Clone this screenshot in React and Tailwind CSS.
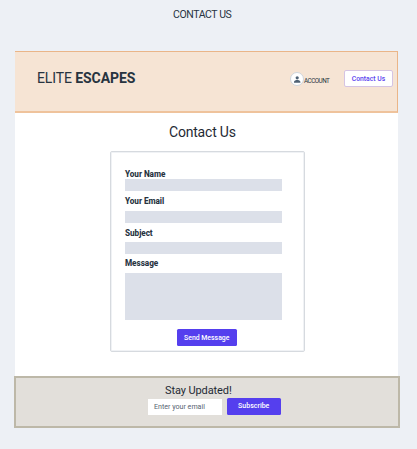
function Field({ label, labelClass, boxClass }) {
  return (
    <div className="flex flex-col">
      <label className={`whitespace-nowrap text-[8.2px] font-extrabold leading-[10px] tracking-[-0.05px] text-[#27333f] ${labelClass}`}>
        {label}
      </label>
      <div className={`w-[156.5px] bg-[#dce0e9] ${boxClass}`} />
    </div>
  );
}

function Header() {
  return (
    <header className="flex h-[62px] w-[383px] shrink-0 border-t border-r border-b-2 border-t-[#eab588] border-r-[#eab588] border-b-[#efc39c] bg-[#f6e4d4]">
      <h1 className="ml-[22px] mt-[17px] w-[120px] whitespace-nowrap text-[14px] leading-[18px] tracking-[-0.1px] text-[#27333f]">
        ELITE <span className="font-bold">ESCAPES</span>
      </h1>
      <div className="ml-[133px] mt-5 flex h-[14px] w-[54px] items-center">
        <svg viewBox="0 0 14 14" className="h-[14px] w-[14px] shrink-0">
          <circle cx="7" cy="7" r="6.5" fill="#fff" stroke="#cfd5dc" />
          <circle cx="7.2" cy="5.8" r="1.6" fill="#4f6275" />
          <path d="M4 10.8V9.9C4 8.6 6 8.1 7.2 8.1s3.2.5 3.2 1.8v.9z" fill="#4f6275" />
        </svg>
        <span className="mt-[3px] whitespace-nowrap text-[6.3px] leading-[8px] tracking-[-0.5px] text-[#27333f]">ACCOUNT</span>
      </div>
      <button className="mt-[18px] flex h-[17px] w-[49px] items-center justify-center whitespace-nowrap rounded-[2px] border border-[#d5c4e3] bg-white pt-px text-[6.8px] font-medium leading-none text-[#5941ee]">
        Contact Us
      </button>
    </header>
  );
}

function ContactForm() {
  return (
    <section className="ml-[95px] mt-[9px] flex h-[201px] w-[195px] shrink-0 flex-col rounded-[2px] border border-[#d6dadf] pl-[14px] shadow-[inset_0_0_0_1px_#f0f2f5]">
      <Field label="Your Name" labelClass="mt-[17px]" boxClass="h-3" />
      <Field label="Your Email" labelClass="mt-[5px] mb-[5px]" boxClass="h-3" />
      <Field label="Subject" labelClass="mt-[5px] mb-1" boxClass="h-3" />
      <Field label="Message" labelClass="mt-1 mb-[5px]" boxClass="h-[47px]" />
      <button className="ml-[51.5px] mt-[9px] flex h-[17px] w-[60.5px] items-center justify-center whitespace-nowrap rounded-[1.5px] bg-[#553fee] pt-px text-[6.9px] font-medium leading-none text-white">
        Send Message
      </button>
    </section>
  );
}

function Newsletter() {
  return (
    <footer className="ml-[-1px] mt-6 h-[52px] w-[386px] shrink-0 border-2 border-[#bdb8a8] bg-[#e2dfda]">
      <h2 className="ml-[149px] mt-[6px] whitespace-nowrap text-[11px] leading-[14px] tracking-[-0.1px] text-[#1f2a35]">
        Stay Updated!
      </h2>
      <div className="ml-[132px] flex h-[17px] items-center">
        <div className="flex h-4 w-[74px] items-center whitespace-nowrap bg-white pl-[6px] text-[7.1px] leading-none text-[#566372]">
          Enter your email
        </div>
        <button className="ml-[5px] flex h-[17px] w-[53.5px] items-center justify-center whitespace-nowrap rounded-[1.5px] bg-[#553fee] text-[7px] font-medium leading-none text-white">
          Subscribe
        </button>
      </div>
    </footer>
  );
}

export default function App() {
  return (
    <div className="h-[449px] w-[417px] overflow-hidden bg-[#edf0f5] font-['Roboto',sans-serif]">
      <div className="h-[51px] pl-[173px] pt-2">
        <p className="whitespace-nowrap text-[10.5px] leading-[14px] tracking-[-0.4px] text-[#27333f]">CONTACT US</p>
      </div>
      <main className="ml-[15px] flex w-[383px] flex-col bg-white">
        <Header />
        <h2 className="ml-[154px] mt-[9px] shrink-0 whitespace-nowrap text-[14px] leading-5 tracking-[-0.2px] text-[#1f2a35]">
          Contact Us
        </h2>
        <ContactForm />
        <Newsletter />
      </main>
    </div>
  );
}
